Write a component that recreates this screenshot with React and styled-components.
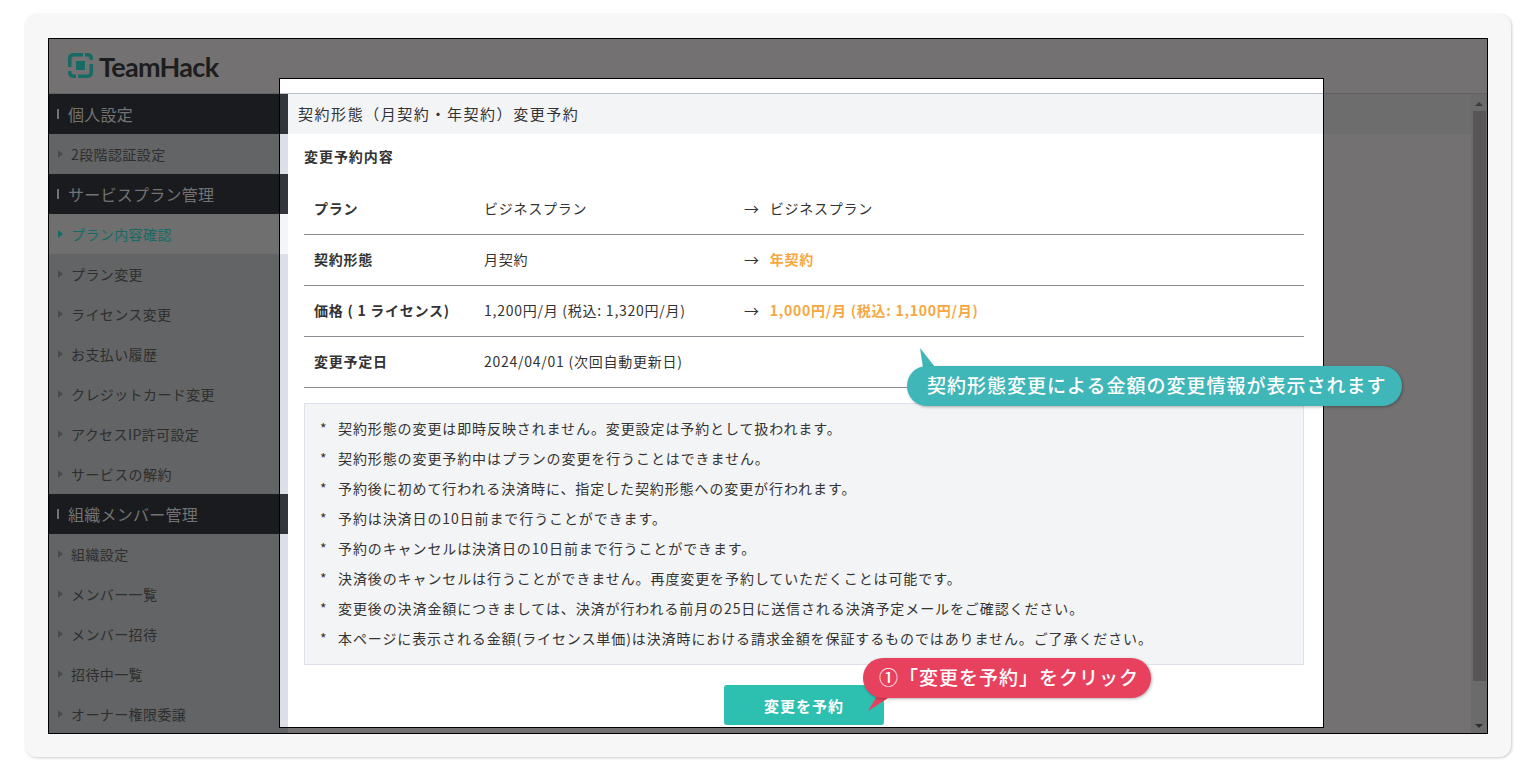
import React from 'react'
import styled, { createGlobalStyle } from 'styled-components'

const Global = createGlobalStyle`
  html, body { margin: 0; padding: 0; background: #fff; }
  body { font-family: "Noto Sans CJK JP", "Noto Sans", sans-serif; }
  * { box-sizing: border-box; }
`
const Page = styled.div`
  width: 1536px;
  height: 771px;
  padding: 14px 25px;
  overflow: hidden;
`
const Card = styled.div`
  height: 743px;
  width: 1486px;
  padding: 24px 23px;
  background: #f7f7f7;
  border-radius: 12px;
  box-shadow: 1px 1px 3px rgba(0,0,0,.2);
`
const Frame = styled.div`
  position: relative;
  width: 1440px;
  height: 696px;
  border: 1px solid #000;
  background: #737171;
  overflow: hidden;
`
const TopBar = styled.header`
  height: 55px;
  padding: 14px 0 0 19px;
  display: flex;
  align-items: flex-start;
  gap: 6px;
  border-bottom: 1px solid #626262;
`
const Brand = styled.span`
  font-family: "Lato", sans-serif;
  font-size: 27px;
  line-height: 27px;
  font-weight: 700;
  letter-spacing: -.7px;
  color: #1d1d1d;
`
const Body = styled.div`
  display: flex;
  height: 640px;
`
const Side = styled.nav`
  width: 239px;
  flex: none;
  background: #636465;
`
const SectionHead = styled.div`
  height: 40px;
  display: flex;
  align-items: center;
  padding: 0 0 1px 8px;
  gap: 9px;
  background: #1a1b1f;
  color: #737373;
  font-size: 16px;
  letter-spacing: .25px;
  &::before {
    content: "";
    width: 2px;
    height: 10px;
    background: #737373;
  }
`
const Item = styled.div`
  height: 40px;
  display: flex;
  align-items: center;
  padding: 0 0 0 9px;
  gap: 8px;
  font-size: 14px;
  letter-spacing: .4px;
  color: ${p => (p.$active ? '#176b64' : '#2e2e2e')};
  background: ${p => (p.$active ? '#6f6f6f' : 'transparent')};
  &::before {
    content: "";
    border-left: 5px solid ${p => (p.$active ? '#176b64' : '#4a4b4c')};
    border-top: 4.5px solid transparent;
    border-bottom: 4.5px solid transparent;
  }
`
const Main = styled.div`
  flex: 1;
  position: relative;
`
const MainBand = styled.div`
  height: 40px;
  background: #6d6d6d;
`
const ScrollBar = styled.div`
  position: absolute;
  right: 0;
  top: 0;
  bottom: 0;
  width: 16px;
  background: #6c6b6b;
  display: flex;
  flex-direction: column;
  align-items: center;
  justify-content: space-between;
  padding: 8px 0 6px 0;
`
const Arrow = styled.span`
  border-left: 4px solid transparent;
  border-right: 4px solid transparent;
  ${p => (p.$up ? 'border-bottom: 4px solid #3d3c3c;' : 'border-top: 4px solid #2f2e2e;')}
`
const Thumb = styled.div`
  position: absolute;
  top: 17px;
  left: 2px;
  width: 13px;
  height: 570px;
  background: #585656;
`
const Modal = styled.section`
  position: absolute;
  left: 230px;
  top: 39px;
  width: 1045px;
  height: 650px;
  background: #fff;
  border: 1px solid #000;
  overflow: hidden;
  display: flex;
  flex-direction: column;
`
const ModalTop = styled.div`
  height: 15px;
  flex: none;
  background: #fff;
  border-bottom: 1px solid #b9bdca;
`
const ModalRow = styled.div`
  flex: 1;
  display: flex;
  min-height: 0;
`
const Rail = styled.div`
  width: 8px;
  flex: none;
  background: #dcdee8;
`
const RailBlock = styled.div`
  height: 40px;
  background: ${p => (p.$kind === 'head' ? '#33353c' : p.$kind === 'active' ? '#f4f5f9' : '#dcdee8')};
`
const ModalMain = styled.div`
  flex: 1;
  min-width: 0;
`
const ModalTitle = styled.h2`
  margin: 0;
  height: 40px;
  display: flex;
  align-items: center;
  padding: 0 0 2px 10px;
  background: #f3f4f6;
  color: #333;
  font-size: 15px;
  font-weight: 400;
  letter-spacing: 1.55px;
`
const Content = styled.div`
  padding: 12px 19px 0 16px;
`
const SubTitle = styled.h3`
  margin: 0 0 18px;
  font-size: 14px;
  line-height: 20px;
  font-weight: 700;
  color: #333;
  letter-spacing: .95px;
`
const Table = styled.div`
  display: flex;
  flex-direction: column;
`
const Row = styled.div`
  height: 51px;
  display: grid;
  grid-template-columns: 170px 260px 1fr;
  align-items: center;
  padding: 0 0 2px 10px;
  border-bottom: 1px solid #8c8c94;
  font-size: 14px;
  letter-spacing: .75px;
  color: #333;
`
const Label = styled.div`
  font-weight: 700;
`
const To = styled.div`
  display: flex;
  align-items: center;
  gap: 10px;
  color: ${p => (p.$hi ? '#f8a73f' : '#333')};
  font-weight: ${p => (p.$hi ? 700 : 400)};
  &::before {
    content: "→";
    color: #333;
    font-weight: 400;
    font-size: 15px;
  }
`
const Notes = styled.ul`
  margin: 15px 0 0;
  padding: 9px 15px 0;
  height: 262px;
  list-style: none;
  background: #f3f4f6;
  border: 1px solid #dfe1ea;
`
const Note = styled.li`
  height: 30px;
  display: flex;
  align-items: center;
  gap: 12px;
  font-size: 14px;
  color: #333;
  letter-spacing: .9px;
  &::before {
    content: "*";
    width: 6px;
  }
`
const Actions = styled.div`
  display: flex;
  justify-content: center;
  margin-top: 20px;
`
const Submit = styled.button`
  width: 160px;
  height: 40px;
  border: 0;
  border-radius: 3px;
  background: #2dbfb0;
  color: #fff;
  font: 700 15px "Noto Sans CJK JP", sans-serif;
  letter-spacing: 1px;
`
const Callout = styled.div`
  position: absolute;
  height: 40px;
  padding: 0 ${p => p.$padR}px 3px ${p => p.$padL}px;
  display: flex;
  align-items: center;
  border-radius: 20px;
  color: #fff;
  font-size: 19px;
  font-weight: 500;
  letter-spacing: 1px;
  white-space: nowrap;
  background: ${p => p.$bg};
  left: ${p => p.$x}px;
  top: ${p => p.$y}px;
  box-shadow: 1px 1px 3px rgba(0,0,0,.3);
`
const Tail = styled.svg`
  position: absolute;
  left: ${p => p.$x}px;
  top: ${p => p.$y}px;
`

function LogoMark() {
  const pieces = (
    <>
      <path d="M0 5a5 5 0 0 1 5-5h10v3.5H6a2.5 2.5 0 0 0-2.5 2.5v8H0z" />
      <path d="M17 0h3a5 5 0 0 1 5 5v2h-3.5V6A2.5 2.5 0 0 0 19 3.5h-2z" />
    </>
  )
  return (
    <svg width="25" height="25" viewBox="0 0 25 25" fill="#176b64">
      {pieces}
      <g transform="rotate(180 12.5 12.5)">{pieces}</g>
      <rect x="8" y="8" width="9" height="9" />
    </svg>
  )
}

const nav = [
  { head: '個人設定', items: ['2段階認証設定'] },
  { head: 'サービスプラン管理', items: ['プラン内容確認', 'プラン変更', 'ライセンス変更', 'お支払い履歴', 'クレジットカード変更', 'アクセスIP許可設定', 'サービスの解約'] },
  { head: '組織メンバー管理', items: ['組織設定', 'メンバー一覧', 'メンバー招待', '招待中一覧', 'オーナー権限委譲'] },
]

const notes = [
  '契約形態の変更は即時反映されません。変更設定は予約として扱われます。',
  '契約形態の変更予約中はプランの変更を行うことはできません。',
  '予約後に初めて行われる決済時に、指定した契約形態への変更が行われます。',
  '予約は決済日の10日前まで行うことができます。',
  '予約のキャンセルは決済日の10日前まで行うことができます。',
  '決済後のキャンセルは行うことができません。再度変更を予約していただくことは可能です。',
  '変更後の決済金額につきましては、決済が行われる前月の25日に送信される決済予定メールをご確認ください。',
  '本ページに表示される金額(ライセンス単価)は決済時における請求金額を保証するものではありません。ご了承ください。',
]

export default function App() {
  return (
    <Page>
      <Global />
      <Card>
        <Frame>
          <TopBar>
            <LogoMark />
            <Brand>TeamHack</Brand>
          </TopBar>
          <Body>
            <Side>
              {nav.map(s => (
                <div key={s.head}>
                  <SectionHead>{s.head}</SectionHead>
                  {s.items.map(i => (
                    <Item key={i} $active={i === 'プラン内容確認'}>{i}</Item>
                  ))}
                </div>
              ))}
            </Side>
            <Main>
              <MainBand />
              <ScrollBar>
                <Arrow $up />
                <Thumb />
                <Arrow />
              </ScrollBar>
            </Main>
          </Body>
          <Modal>
            <ModalTop />
            <ModalRow>
              <Rail>
                {nav.map(s => (
                  <div key={s.head}>
                    <RailBlock $kind="head" />
                    {s.items.map(i => (
                      <RailBlock key={i} $kind={i === 'プラン内容確認' ? 'active' : 'item'} />
                    ))}
                  </div>
                ))}
              </Rail>
              <ModalMain>
                <ModalTitle>契約形態（月契約・年契約）変更予約</ModalTitle>
                <Content>
                  <SubTitle>変更予約内容</SubTitle>
                  <Table>
                    <Row>
                      <Label>プラン</Label>
                      <div>ビジネスプラン</div>
                      <To>ビジネスプラン</To>
                    </Row>
                    <Row>
                      <Label>契約形態</Label>
                      <div>月契約</div>
                      <To $hi>年契約</To>
                    </Row>
                    <Row>
                      <Label>価格 ( 1 ライセンス)</Label>
                      <div>1,200円/月 (税込: 1,320円/月)</div>
                      <To $hi>1,000円/月 (税込: 1,100円/月)</To>
                    </Row>
                    <Row>
                      <Label>変更予定日</Label>
                      <div>2024/04/01 (次回自動更新日)</div>
                    </Row>
                  </Table>
                  <Notes>
                    {notes.map(n => <Note key={n}>{n}</Note>)}
                  </Notes>
                  <Actions>
                    <Submit>変更を予約</Submit>
                  </Actions>
                </Content>
              </ModalMain>
            </ModalRow>
          </Modal>
          <Tail $x={868} $y={309} width="30" height="22" viewBox="0 0 30 22">
            <path d="M3 0 L18 19 L6 20 Z" fill="#3fb6b8" />
          </Tail>
          <Callout $bg="#3fb6b8" $padL={20} $padR={16} $x={858} $y={327}>契約形態変更による金額の変更情報が表示されます</Callout>
          <Tail $x={818} $y={645} width="30" height="30" viewBox="0 0 30 30">
            <path d="M1 27 L10 12 L21 14 Z" fill="#e7415e" />
          </Tail>
          <Callout $bg="#e7415e" $padL={16} $padR={12} $x={814} $y={619}>①「変更を予約」をクリック</Callout>
        </Frame>
      </Card>
    </Page>
  )
}
